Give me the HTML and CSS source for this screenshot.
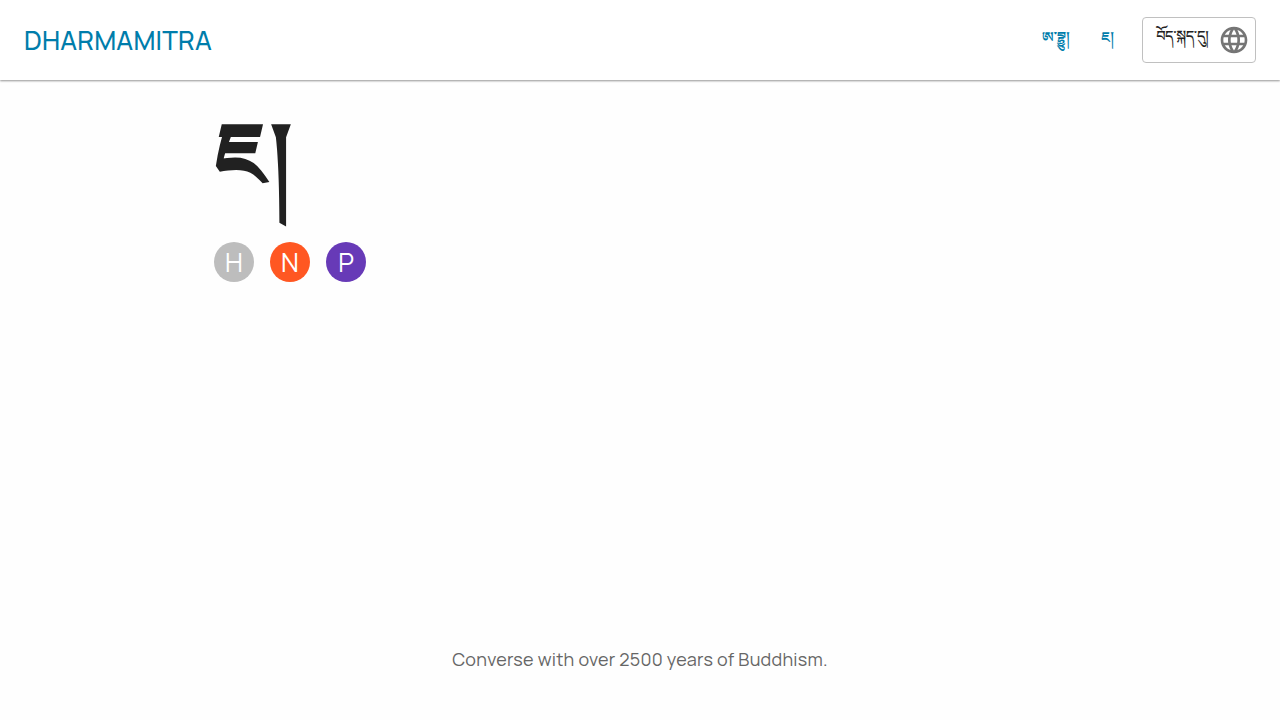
FILE: index.html
```html
<!DOCTYPE html>
<html lang="bo">
<head>
<meta charset="utf-8">
<title>DHARMAMITRA</title>
<link rel="stylesheet" href="styles.css">
</head>
<body>
<header class="bar">
  <a class="brand">DHARMAMITRA</a>
  <nav class="nav">
    <a class="link link-about">ཨ་བྷྱུ།</a>
    <a class="link link-team">ཇ།</a>
    <button class="lang"><span class="lang-name">བོད་སྐད་དུ།</span>
      <svg class="globe" viewBox="0 0 24 24"><path fill="currentColor" d="M11.99 2C6.47 2 2 6.48 2 12s4.47 10 9.99 10C17.52 22 22 17.52 22 12S17.52 2 11.99 2zm6.93 6h-2.95c-.32-1.25-.78-2.45-1.38-3.56 1.84.63 3.37 1.91 4.33 3.56zM12 4.04c.83 1.2 1.48 2.53 1.91 3.96h-3.82c.43-1.43 1.08-2.76 1.91-3.96zM4.26 14C4.1 13.36 4 12.69 4 12s.1-1.36.26-2h3.38c-.08.66-.14 1.32-.14 2s.06 1.34.14 2H4.26zm.82 2h2.95c.32 1.25.78 2.45 1.38 3.56-1.84-.63-3.37-1.9-4.33-3.56zm2.95-8H5.08c.96-1.66 2.49-2.93 4.33-3.56C8.81 5.55 8.35 6.75 8.03 8zM12 19.96c-.83-1.2-1.48-2.53-1.91-3.96h3.82c-.43 1.43-1.08 2.76-1.91 3.96zM14.34 14H9.66c-.09-.66-.16-1.32-.16-2s.07-1.35.16-2h4.68c.09.65.16 1.32.16 2s-.07 1.34-.16 2zm.25 5.56c.6-1.11 1.06-2.31 1.38-3.56h2.95c-.96 1.65-2.49 2.93-4.33 3.56zM16.36 14c.08-.66.14-1.32.14-2s-.06-1.34-.14-2h3.38c.16.64.26 1.31.26 2s-.1 1.36-.26 2h-3.38z"/></svg>
    </button>
  </nav>
</header>
<main class="page">
  <h1 class="title">ཇ།</h1>
  <div class="avatars">
    <span class="avatar grey">H</span>
    <span class="avatar orange">N</span>
    <span class="avatar purple">P</span>
  </div>
</main>
<footer class="footer"><span class="motto">Converse with over 2500 years of Buddhism.</span></footer>
</body>
</html>
```

FILE: styles.css
```css
* { box-sizing: border-box; }
body { margin: 0; height: 720px; display: flex; flex-direction: column; overflow: hidden; background: #fefefe; color: #212121; font-family: Manrope, Inter, sans-serif; }
.bar { height: 80px; flex: none; display: flex; align-items: center; justify-content: space-between; padding: 0 24px; background: #fff; box-shadow: 0 1px 2px rgba(0,0,0,.42); }
.brand { color: #007dab; font-size: 26px; font-weight: 500; letter-spacing: .22px; }
.nav { display: flex; align-items: center; }
.link { color: #007dab; font-family: "Noto Serif Tibetan", serif; font-size: 14.5px; line-height: 24px; font-weight: 600; padding-top: 4px; }
.link-about { margin-right: 32px; letter-spacing: -.5px; }
.link-team { margin-right: 28px; }
.lang { width: 114px; height: 46px; display: flex; align-items: center; justify-content: space-between; padding: 0 5px 0 13px; border: 1px solid #c0c0c0; border-radius: 4px; background: #fff; color: #212121; }
.lang-name { font-family: "Noto Serif Tibetan", serif; font-size: 14.5px; line-height: 24px; font-weight: 500; letter-spacing: -.4px; padding-top: 2px; }
.globe { width: 32px; height: 32px; flex: none; color: #757575; }
.page { flex: 1; width: 852px; margin: 0 auto; padding-top: 28px; }
.title { margin: 0; height: 134px; font-family: "Noto Serif Tibetan", serif; font-size: 88px; font-weight: 700; line-height: 142px; }
.avatars { display: flex; gap: 16px; }
.avatar { width: 40px; height: 40px; border-radius: 50%; display: flex; align-items: center; justify-content: center; color: #fff; font-size: 26px; line-height: 38px; padding-bottom: 1px; }
.grey { background: #bdbdbd; }
.orange { background: #ff5722; }
.purple { background: #673ab7; }
.footer { height: 122px; display: flex; justify-content: center; align-items: center; }
.motto { font-size: 18px; letter-spacing: .25px; color: #666; }
```
